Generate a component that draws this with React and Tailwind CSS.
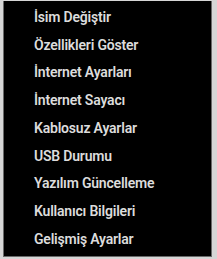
const items = [
  'İsim Değiştir',
  'Özellikleri Göster',
  'İnternet Ayarları',
  'İnternet Sayacı',
  'Kablosuz Ayarlar',
  'USB Durumu',
  'Yazılım Güncelleme',
  'Kullanıcı Bilgileri',
  'Gelişmiş Ayarlar',
];

export default function App() {
  return (
    <div className="w-[217px] h-[259px] bg-[#d6d6d6] pl-[3px] pr-[5px] pt-px pb-[2px]">
      <div className="h-full bg-black border-l border-r border-b border-[#6a6a6a] flex flex-col pt-[2px] pl-[30px] font-['Roboto',sans-serif]">
        {items.map((item) => (
          <div key={item} className="h-[27.75px] flex items-center text-[14px] font-semibold tracking-[-0.2px] text-[#dcdcdc] leading-none whitespace-nowrap">
            {item}
          </div>
        ))}
      </div>
    </div>
  );
}
